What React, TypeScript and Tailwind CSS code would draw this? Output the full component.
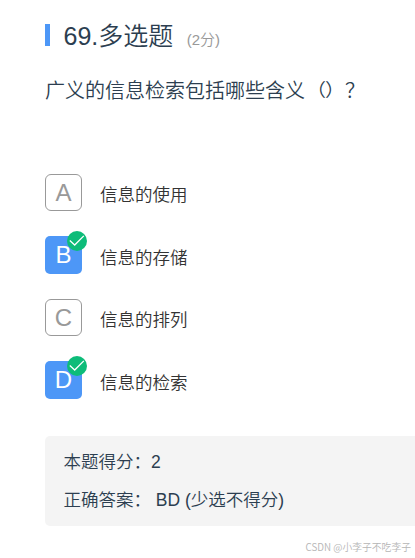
type Option = {
  letter: string;
  text: string;
  selected: boolean;
};

const options: Option[] = [
  { letter: "A", text: "信息的使用", selected: false },
  { letter: "B", text: "信息的存储", selected: true },
  { letter: "C", text: "信息的排列", selected: false },
  { letter: "D", text: "信息的检索", selected: true },
];

function CheckBadge() {
  return (
    <svg className="absolute -top-[5px] left-[22px] h-5 w-5" viewBox="0 0 20 20" fill="none">
      <circle cx="10" cy="10" r="10" fill="#0dbc79" />
      <path d="M2.8 9.6 7.7 14 16.8 4.9" stroke="#fff" strokeWidth="1.3" />
    </svg>
  );
}

function OptionRow({ option }: { option: Option }) {
  return (
    <li className="flex h-[62.5px] items-start">
      {option.selected ? (
        <div className="relative -mt-px flex h-[38px] w-[37px] items-center justify-center rounded-[5px] bg-[#4d97f7] pt-px text-[24px] text-white">
          {option.letter}
          <CheckBadge />
        </div>
      ) : (
        <div className="flex h-[37px] w-[37px] items-center justify-center rounded-[6px] border border-[#999] pt-px text-[24px] text-[#999]">
          {option.letter}
        </div>
      )}
      <span className="ml-[18px] mt-[8px] text-[17.5px] leading-[26px] text-[#333]">
        {option.text}
      </span>
    </li>
  );
}

export default function App() {
  return (
    <main className="h-[558px] w-[415px] overflow-hidden bg-white pl-[45px] pt-[20px] font-['Liberation_Sans','Noto_Sans_CJK_SC',sans-serif] font-[350] text-[#2c3e50]">
      <header className="flex h-[32px] items-start">
        <div className="mt-[4px] h-[22px] w-[5px] bg-[#4d97f7]" />
        <h1 className="ml-[13.5px] text-[25px] leading-[32px]">69.多选题</h1>
        <span className="ml-[13.5px] mt-[9px] text-[15px] leading-[22px] text-[#999]">(2分)</span>
      </header>

      <p className="mt-[24px] whitespace-nowrap text-[20px] leading-[30px]">
        广义的信息检索包括哪些含义
        <span className="inline-block -translate-y-px scale-y-90">
          <span className="ml-px">（</span>
          <span className="-ml-px">）</span>
        </span>
        ？
      </p>

      <ul className="mt-[68px]">
        {options.map((o) => (
          <OptionRow key={o.letter} option={o} />
        ))}
      </ul>

      <section className="mt-[12px] h-[90px] rounded-l-[5px] bg-[#f4f4f4] pl-[18.5px] pt-[7px] text-[17.5px] leading-[38px]">
        <p>本题得分：2</p>
        <p className="whitespace-pre">正确答案： BD (少选不得分)</p>
      </section>

      <footer className="mt-[14px] pr-[4px] text-right font-['Noto_Sans_CJK_SC',sans-serif] text-[9.8px] leading-[14px] text-[#b5b5b5]">
        CSDN @小李子不吃李子
      </footer>
    </main>
  );
}
